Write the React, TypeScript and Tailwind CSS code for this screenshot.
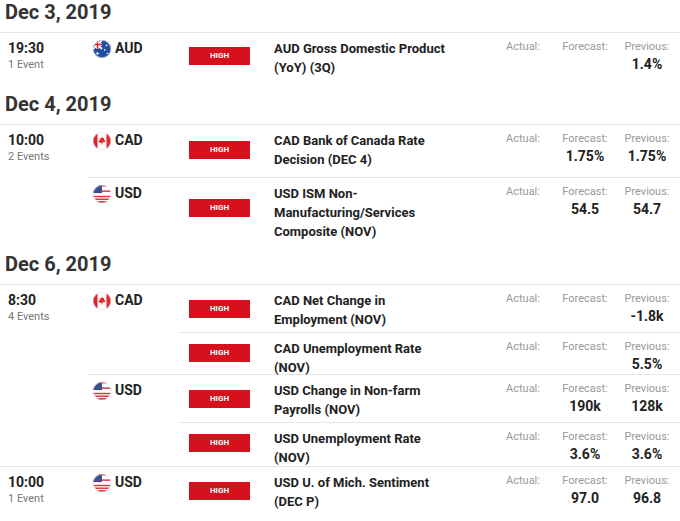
import React from "react";

type Ev = { title: string; h: number; f?: string; p?: string };
type Cur = { code: "AUD" | "CAD" | "USD"; events: Ev[] };
type Grp = { time: string; count: string; curs: Cur[] };
type Day = { date: string; groups: Grp[] };

const data: Day[] = [
  { date: "Dec 3, 2019", groups: [{ time: "19:30", count: "1 Event", curs: [{ code: "AUD", events: [{ title: "AUD Gross Domestic Product (YoY) (3Q)", h: 45, p: "1.4%" }] }] }] },
  { date: "Dec 4, 2019", groups: [{ time: "10:00", count: "2 Events", curs: [
    { code: "CAD", events: [{ title: "CAD Bank of Canada Rate Decision (DEC 4)", h: 50, f: "1.75%", p: "1.75%" }] },
    { code: "USD", events: [{ title: "USD ISM Non-Manufacturing/Services Composite (NOV)", h: 60, f: "54.5", p: "54.7" }] },
  ] }] },
  { date: "Dec 6, 2019", groups: [
    { time: "8:30", count: "4 Events", curs: [
      { code: "CAD", events: [
        { title: "CAD Net Change in Employment (NOV)", h: 47, p: "-1.8k" },
        { title: "CAD Unemployment Rate (NOV)", h: 40, p: "5.5%" },
      ] },
      { code: "USD", events: [
        { title: "USD Change in Non-farm Payrolls (NOV)", h: 47, f: "190k", p: "128k" },
        { title: "USD Unemployment Rate (NOV)", h: 41, f: "3.6%", p: "3.6%" },
      ] },
    ] },
    { time: "10:00", count: "1 Event", curs: [{ code: "USD", events: [{ title: "USD U. of Mich. Sentiment (DEC P)", h: 48, f: "97.0", p: "96.8" }] }] },
  ] },
];

function Flag({ code }: { code: string }) {
  const id = "c" + code;
  return (
    <svg width="18" height="18" viewBox="0 0 20 20" className="shrink-0">
      <defs><clipPath id={id}><circle cx="10" cy="10" r="10" /></clipPath></defs>
      <g clipPath={`url(#${id})`}>
        {code === "AUD" && (
          <>
            <rect width="20" height="20" fill="#1f4fa0" />
            <path d="M0 0L10 10M10 0L0 10" stroke="#fff" strokeWidth="2" />
            <path d="M5 0V10M0 5H10" stroke="#fff" strokeWidth="3" />
            <path d="M5 0V10M0 5H10" stroke="#d22" strokeWidth="1.5" />
            <circle cx="5" cy="15" r="1.3" fill="#fff" />
            <circle cx="15" cy="6" r="0.9" fill="#fff" />
            <circle cx="13" cy="11" r="0.9" fill="#fff" />
            <circle cx="16" cy="15" r="0.9" fill="#fff" />
          </>
        )}
        {code === "CAD" && (
          <>
            <rect width="20" height="20" fill="#fff" />
            <rect width="5" height="20" fill="#e0252a" />
            <rect x="15" width="5" height="20" fill="#e0252a" />
            <path d="M10 5l1 2 1.5-.5-.5 3 1.5-1 .5 1 -1 1.5 .5.5h-3v2.5h-1V12h-3l.5-.5-1-1.5.5-1 1.5 1-.5-3 1.5.5z" fill="#e0252a" />
          </>
        )}
        {code === "USD" && (
          <>
            <rect width="20" height="20" fill="#fff" />
            {[0, 2, 4, 6, 8].map((i) => (
              <rect key={i} y={i * 3} width="20" height="1.6" fill="#d2343b" />
            ))}
            <rect y="15" width="20" height="1.6" fill="#d2343b" />
            <rect y="18" width="20" height="2" fill="#d2343b" />
            <rect width="10" height="9" fill="#3c4f8f" />
          </>
        )}
      </g>
      <circle cx="10" cy="10" r="9.6" fill="none" stroke="#ddd" strokeWidth="0.6" />
    </svg>
  );
}

function Val({ label, v }: { label: string; v?: string }) {
  return (
    <div className="w-[62px] flex flex-col items-center">
      <span className="text-[11px] text-[#999] leading-[14px]">{label}</span>
      {v && <span className="text-[14px] font-bold text-[#222] leading-[18px] mt-[1px]">{v}</span>}
    </div>
  );
}

export default function App() {
  return (
    <div className="w-[680px] h-[521px] overflow-hidden bg-white" style={{ fontFamily: "Roboto, 'Liberation Sans', sans-serif" }}>
      {data.map((d, di) => (
        <div key={di}>
          <div className={`${di === 0 ? "h-[32px]" : "h-[46px] pt-[14px]"} pl-[5px] text-[20px] font-bold text-[#333] leading-[24px]`}>
            {d.date}
          </div>
          {d.groups.map((g, gi) => (
            <div key={gi} className={`flex border-t border-[#e6e6e6] ${gi > 0 ? "mt-[3px]" : ""}`}>
              <div className="w-[88px] shrink-0 pl-[8px] pt-[6px]">
                <div className="text-[14px] font-bold text-[#222] leading-[18px]">{g.time}</div>
                <div className="text-[11px] text-[#777] leading-[15px]">{g.count}</div>
              </div>
              <div className="flex-1">
                {g.curs.map((c, ci) => (
                  <div key={ci} className={`flex ${ci > 0 ? "border-t border-[#e6e6e6] mt-[2px]" : ""}`}>
                    <div className="w-[90px] shrink-0 flex items-center gap-[4px] pl-[5px] pt-[5px] self-start">
                      <Flag code={c.code} />
                      <span className="text-[14px] font-bold text-[#222]">{c.code}</span>
                    </div>
                    <div className="flex-1">
                      {c.events.map((e, ei) => (
                        <div key={ei} className={`flex ${ei > 0 ? "border-t border-[#e6e6e6]" : ""}`} style={{ height: e.h }}>
                          <div className="w-[96px] shrink-0 flex items-center pl-[11px]">
                            <div className="w-[61px] h-[18px] bg-[#d7101d] text-white text-[8px] font-bold flex items-center justify-center">HIGH</div>
                          </div>
                          <div className="w-[218px] shrink-0 pt-[6px]">
                            <div className="w-[185px] text-[13px] font-bold text-[#222] leading-[19px]">{e.title}</div>
                          </div>
                          <div className="flex pt-[7px] gap-0">
                            <Val label="Actual:" />
                            <Val label="Forecast:" v={e.f} />
                            <Val label="Previous:" v={e.p} />
                          </div>
                        </div>
                      ))}
                    </div>
                  </div>
                ))}
              </div>
            </div>
          ))}
        </div>
      ))}
    </div>
  );
}
